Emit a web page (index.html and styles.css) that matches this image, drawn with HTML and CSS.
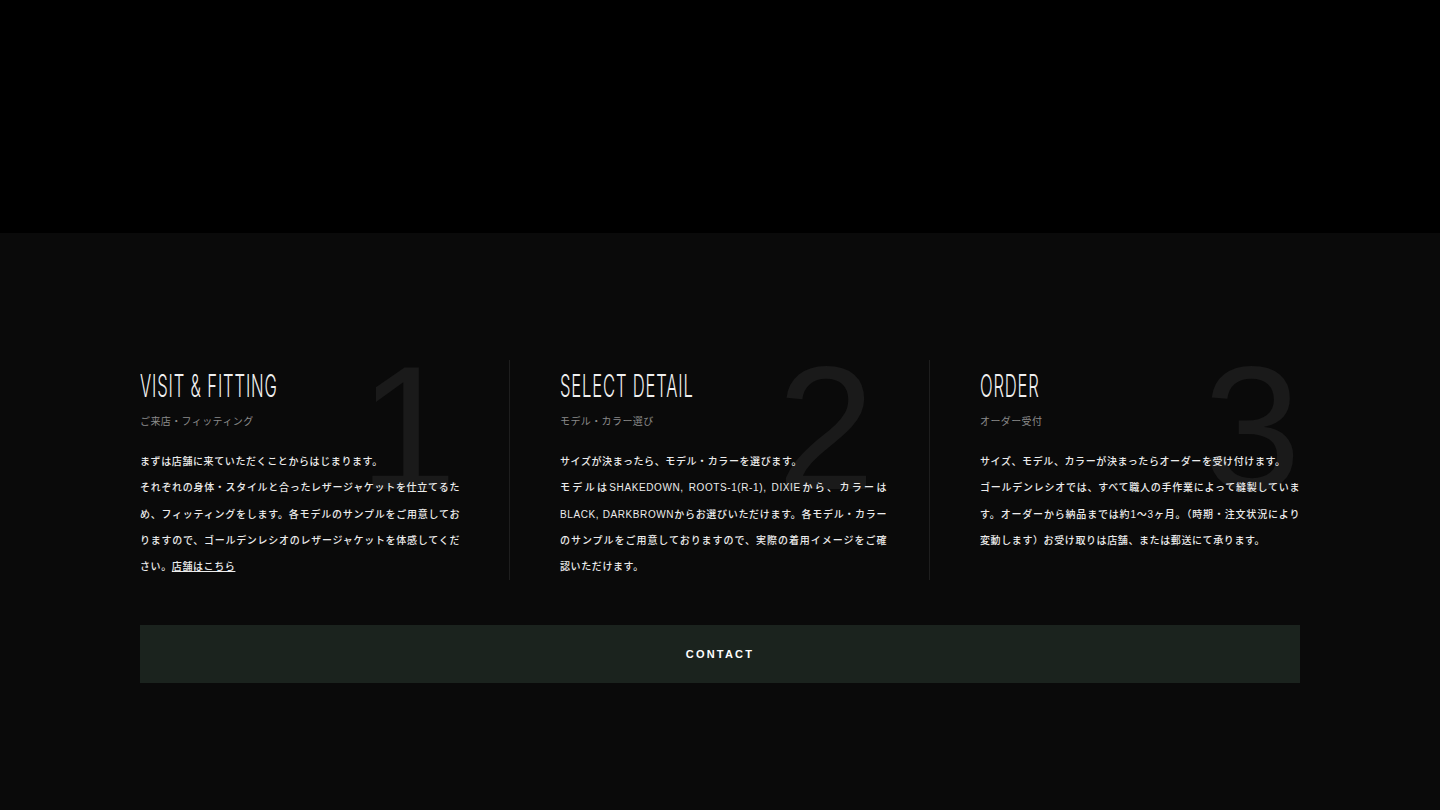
FILE: index.html
```html
<!DOCTYPE html>
<html lang="ja">
<head>
  <meta charset="UTF-8" />
  <title>Order Flow</title>
  <link rel="stylesheet" href="styles.css">
</head>
<body>
  <div class="top-band"></div>

  <section class="flow">
    <div class="steps">
      <div class="step">
        <span class="step-num">1</span>
        <h2 class="step-title"><span>VISIT &amp; FITTING</span></h2>
        <p class="step-sub">ご来店・フィッティング</p>
        <p class="step-text">まずは店舗に来ていただくことからはじまります。<br>それぞれの身体・スタイルと合ったレザージャケットを仕立てるため、フィッティングをします。各モデルのサンプルをご用意しておりますので、ゴールデンレシオのレザージャケットを体感してください。<a href="#">店舗はこちら</a></p>
      </div>

      <div class="step">
        <span class="step-num">2</span>
        <h2 class="step-title"><span>SELECT DETAIL</span></h2>
        <p class="step-sub">モデル・カラー選び</p>
        <p class="step-text">サイズが決まったら、モデル・カラーを選びます。<br>モデルはSHAKEDOWN, ROOTS-1(R-1), DIXIEから、カラーはBLACK, DARKBROWNからお選びいただけます。各モデル・カラーのサンプルをご用意しておりますので、実際の着用イメージをご確認いただけます。</p>
      </div>

      <div class="step">
        <span class="step-num">3</span>
        <h2 class="step-title"><span>ORDER</span></h2>
        <p class="step-sub">オーダー受付</p>
        <p class="step-text">サイズ、モデル、カラーが決まったらオーダーを受け付けます。<br>ゴールデンレシオでは、すべて職人の手作業によって縫製しています。オーダーから納品までは約1〜3ヶ月。（時期・注文状況により変動します）お受け取りは店舗、または郵送にて承ります。</p>
      </div>
    </div>

    <a class="contact-btn" href="#">CONTACT</a>
  </section>
</body>
</html>
```

FILE: styles.css
```css
body {
  margin: 0;
  background: #0a0a0a;
  color: #e6e6e6;
  font-family: "Liberation Sans", "Noto Sans CJK JP", sans-serif;
}

.top-band {
  height: 233px;
  background: #000;
}

.flow {
  padding: 127px 140px 126px;
}

.steps {
  display: flex;
}

.step {
  position: relative;
  width: 320px;
  padding: 8px 49px 0 50px;
  border-right: 1px solid #1e1e1e;
  min-height: 212px;
}

.step:first-child {
  padding-left: 0;
}

.step:last-child {
  padding-right: 0;
  border-right: none;
}

/* big faded number behind the text */
.step-num {
  position: absolute;
  top: -20px;
  right: 54px;
  font-family: "Liberation Sans", sans-serif;
  font-weight: 400;
  font-size: 176px;
  line-height: 1;
  color: #1a1a1a;
}

.step:first-child .step-num {
  right: 52px;
}

.step:last-child .step-num {
  right: -1px;
}

.step-title {
  position: relative;
  margin: 0;
  height: 36px;
  font-family: Inter, "Liberation Sans", sans-serif;
  font-weight: 300;
  font-size: 31px;
  line-height: 36px;
  color: #f0f0f0;
  white-space: nowrap;
}

.step-title span {
  display: inline-block;
  transform: scaleX(0.536);
  transform-origin: left center;
  letter-spacing: 0.05em;
}

.step-sub {
  position: relative;
  margin: 9px 0 0;
  font-size: 10px;
  letter-spacing: 0.04em;
  color: #8a8a8a;
}

.step-text {
  position: relative;
  margin: 21px 0 0;
  font-size: 10px;
  font-weight: 500;
  line-height: 26.3px;
  letter-spacing: 0.06em;
  text-align: justify;
  color: #ececec;
}

/* latin words are wider in the original, give this one a little room */
.step:nth-child(2) .step-text {
  margin-right: -7px;
}

.step-text a {
  color: #ececec;
  text-decoration: underline;
}

.contact-btn {
  display: block;
  margin-top: 45px;
  height: 58px;
  line-height: 58px;
  background: #1b231e;
  color: #fff;
  text-align: center;
  text-decoration: none;
  font-size: 11px;
  font-weight: 700;
  letter-spacing: 0.2em;
}
```
